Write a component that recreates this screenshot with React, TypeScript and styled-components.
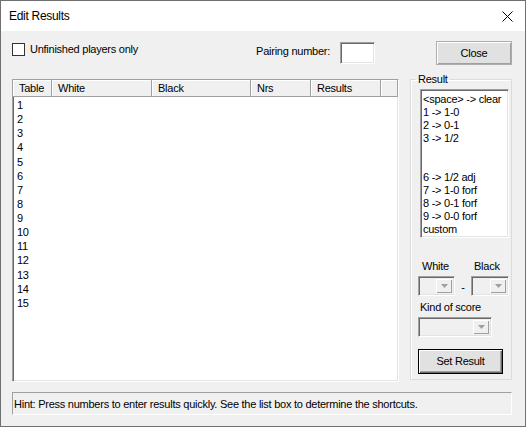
import React from 'react';
import styled, { createGlobalStyle, css } from 'styled-components';

const GlobalStyle = createGlobalStyle`
  html, body {
    margin: 0;
    padding: 0;
    background: #ffffff;
  }
  body {
    font-family: "Liberation Sans", Arial, sans-serif;
    font-size: 11px;
    color: #000;
  }
  * {
    box-sizing: border-box;
  }
`;

const sunken = css`
  border: 1px solid;
  border-color: #a0a0a0 #ffffff #ffffff #a0a0a0;
  box-shadow: inset 1px 1px #696969, inset -1px -1px #e3e3e3;
`;

const Window = styled.div`
  width: 526px;
  height: 427px;
  border: 1px solid #707070;
  background: #f0f0f0;
  display: flex;
  flex-direction: column;
  letter-spacing: -0.25px;
`;

const TitleBar = styled.div`
  height: 30px;
  flex: none;
  background: #ffffff;
  display: flex;
  align-items: center;
  justify-content: space-between;
  padding: 0 12px 0 8px;
  font-size: 12px;
  letter-spacing: -0.3px;
`;

const Client = styled.div`
  flex: 1;
  display: flex;
  flex-direction: column;
  padding: 10px 13px 11px 11px;
  min-height: 0;
`;

const TopRow = styled.div`
  display: flex;
  align-items: flex-start;
  height: 24px;
  flex: none;
`;

const CheckLabel = styled.label`
  display: flex;
  align-items: center;
  gap: 5px;
  margin-top: 2px;
  line-height: 13px;
`;

const CheckBox = styled.span`
  width: 13px;
  height: 13px;
  background: #ffffff;
  border: 1px solid #333333;
`;

const PairingLabel = styled.span`
  margin-left: auto;
  margin-top: 4px;
  line-height: 13px;
`;

const TextInput = styled.div`
  ${sunken};
  width: 35px;
  height: 22px;
  margin: 1px 0 0 10px;
  background: #ffffff;
`;

const Button = styled.div<{ $default?: boolean; $width: number; $height: number }>`
  width: ${(p) => p.$width}px;
  height: ${(p) => p.$height}px;
  display: flex;
  align-items: center;
  justify-content: center;
  background: #e1e1e1;
  line-height: 13px;
  border: 1px solid ${(p) => (p.$default ? '#000000' : '#adadad')};
  box-shadow: ${(p) =>
    p.$default
      ? 'inset 1px 1px #ffffff, inset -1px -1px #696969, inset -2px -2px #a0a0a0'
      : 'inset 1px 1px #ffffff, inset -1px -1px #a0a0a0'};
`;

const CloseButton = styled(Button)`
  margin-left: 61px;
  padding-top: 1px;
`;

const Main = styled.div`
  flex: 1;
  display: flex;
  gap: 11px;
  margin-top: 7px;
  min-height: 0;
`;

const ListView = styled.div`
  ${sunken};
  flex: 1;
  margin-top: 7px;
  background: #ffffff;
  overflow: hidden;
`;

const columns = '39px 100px 99px 60px 70px 1fr';

const Header = styled.div`
  display: grid;
  grid-template-columns: ${columns};
  height: 17px;
`;

const HeaderCell = styled.div`
  background: #f0f0f0;
  padding-left: 6px;
  line-height: 16px;
  border-right: 1px solid #a0a0a0;
  border-bottom: 1px solid #a0a0a0;
  box-shadow: inset 1px 1px #ffffff;
  white-space: nowrap;
  overflow: hidden;
`;

const Rows = styled.div`
  padding-top: 1px;
`;

const Row = styled.div`
  display: grid;
  grid-template-columns: ${columns};
  line-height: 14.14px;
  height: 14.14px;
`;

const Cell = styled.div`
  padding-left: 4px;
  white-space: nowrap;
  overflow: hidden;
`;

const Group = styled.fieldset`
  width: 102px;
  margin: 0 0 2px 0;
  padding: 3px 0 0 9px;
  border: 1px solid #dcdcdc;
  box-shadow: inset 1px 1px #ffffff;
  display: flex;
  flex-direction: column;
  min-width: 0;
`;

const Legend = styled.legend`
  margin-left: -4px;
  padding: 0 2px;
  line-height: 14px;
`;

const ListBox = styled.div`
  ${sunken};
  width: 89px;
  height: 149px;
  background: #ffffff;
  padding: 3px 0 0 2px;
  overflow: hidden;
`;

const ListItem = styled.div`
  height: 13px;
  line-height: 13px;
  white-space: nowrap;
`;

const ScoreLabels = styled.div`
  display: grid;
  grid-template-columns: 52px auto;
  margin: 22px 0 0 2px;
  line-height: 13px;
`;

const ComboRow = styled.div`
  display: flex;
  align-items: center;
  margin: 3px 0 0 -2px;
`;

const Dash = styled.span`
  width: 16px;
  text-align: center;
  line-height: 13px;
  padding-top: 2px;
`;

const Combo = styled.div<{ $width: number }>`
  ${sunken};
  width: ${(p) => p.$width}px;
  height: 20px;
  background: #f0f0f0;
  display: flex;
  justify-content: flex-end;
  padding: 2px;
`;

const DropButton = styled.div`
  width: 16px;
  height: 100%;
  background: #f0f0f0;
  display: flex;
  align-items: center;
  justify-content: center;
  box-shadow: inset 1px 1px #ffffff, inset -1px -1px #a0a0a0;
`;

const KindLabel = styled.div`
  margin: 5px 0 0 0;
  line-height: 13px;
`;

const KindCombo = styled(Combo)`
  margin: 3px 0 0 -2px;
`;

const SetButton = styled(Button)`
  margin: 12px 0 0 -2px;
`;

const Hint = styled.div`
  flex: none;
  height: 23px;
  margin-top: 10px;
  border: 1px solid;
  border-color: #a0a0a0 #ffffff #ffffff #a0a0a0;
  padding-left: 1px;
  display: flex;
  align-items: center;
  white-space: nowrap;
`;

const CloseIcon = () => (
  <svg width="11" height="11" viewBox="0 0 11 11">
    <path d="M0.5 0.5 L10.5 10.5 M10.5 0.5 L0.5 10.5" stroke="#000" strokeWidth="1" fill="none" />
  </svg>
);

const Arrow = () => (
  <svg width="7" height="4" viewBox="0 0 7 4">
    <path d="M0 0 H7 L3.5 4 Z" fill="#a0a0a0" />
  </svg>
);

const headers = ['Table', 'White', 'Black', 'Nrs', 'Results', ''];
const shortcuts = [
  '<space> -> clear',
  '1 -> 1-0',
  '2 -> 0-1',
  '3 -> 1/2',
  '',
  '',
  '6 -> 1/2 adj',
  '7 -> 1-0 forf',
  '8 -> 0-1 forf',
  '9 -> 0-0 forf',
  'custom',
];
const tables = Array.from({ length: 15 }, (_, i) => i + 1);

const App: React.FC = () => {
  return (
    <>
      <GlobalStyle />
      <Window>
        <TitleBar>
          <span>Edit Results</span>
          <CloseIcon />
        </TitleBar>
        <Client>
          <TopRow>
            <CheckLabel>
              <CheckBox />
              <span>Unfinished players only</span>
            </CheckLabel>
            <PairingLabel>Pairing number:</PairingLabel>
            <TextInput />
            <CloseButton $width={76} $height={24}>Close</CloseButton>
          </TopRow>
          <Main>
            <ListView>
              <Header>
                {headers.map((h, i) => (
                  <HeaderCell key={i}>{h}</HeaderCell>
                ))}
              </Header>
              <Rows>
                {tables.map((n) => (
                  <Row key={n}>
                    <Cell>{n}</Cell>
                  </Row>
                ))}
              </Rows>
            </ListView>
            <Group>
              <Legend>Result</Legend>
              <ListBox>
                {shortcuts.map((s, i) => (
                  <ListItem key={i}>{s}</ListItem>
                ))}
              </ListBox>
              <ScoreLabels>
                <span>White</span>
                <span>Black</span>
              </ScoreLabels>
              <ComboRow>
                <Combo $width={37}>
                  <DropButton><Arrow /></DropButton>
                </Combo>
                <Dash>-</Dash>
                <Combo $width={38}>
                  <DropButton><Arrow /></DropButton>
                </Combo>
              </ComboRow>
              <KindLabel>Kind of score</KindLabel>
              <KindCombo $width={74}>
                <DropButton><Arrow /></DropButton>
              </KindCombo>
              <SetButton $default $width={85} $height={25}>Set Result</SetButton>
            </Group>
          </Main>
          <Hint>Hint: Press numbers to enter results quickly. See the list box to determine the shortcuts.</Hint>
        </Client>
      </Window>
    </>
  );
};

export default App;
